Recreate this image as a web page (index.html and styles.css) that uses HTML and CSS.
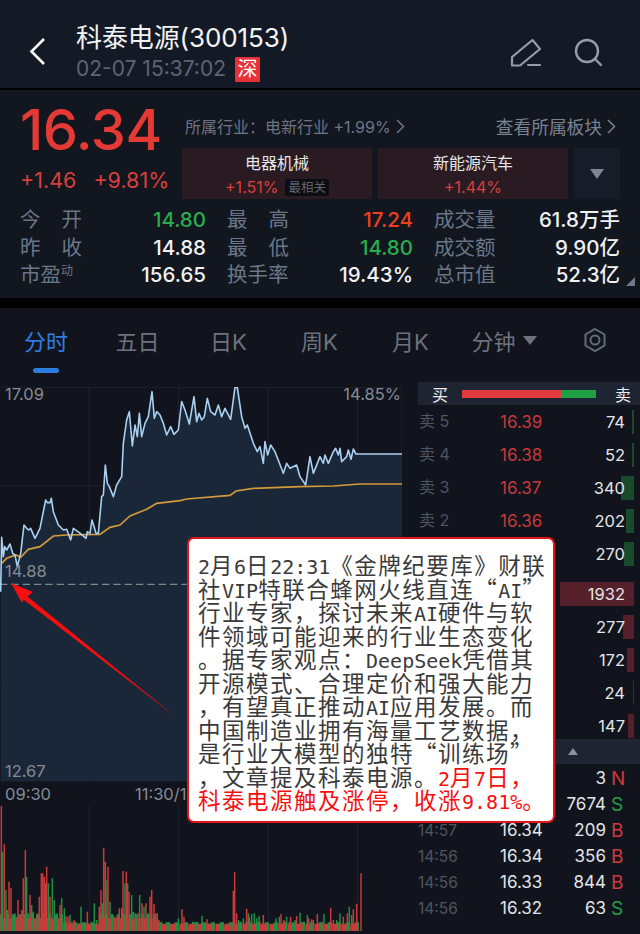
FILE: index.html
```html
<!DOCTYPE html>
<html lang="zh">
<head>
<meta charset="utf-8">
<title>科泰电源(300153)</title>
<link rel="stylesheet" href="styles.css">
</head>
<body>
<div class="page">
  <header class="topbar">
    <svg class="back" width="20" height="32" viewBox="0 0 20 32"><path d="M16 3 3.5 15.5 16 28"/></svg>
    <div class="title-block">
      <div class="title">科泰电源(300153)</div>
      <div class="subtitle"><span>02-07 15:37:02</span><span class="badge">深</span></div>
    </div>
    <svg class="edit" width="32" height="30" viewBox="0 0 32 30"><path d="M2 27.500V19L22.500 2 30 11 10 27.500H2Z"/><path d="M18 27H30"/></svg>
    <svg class="search" width="32" height="32" viewBox="0 0 32 32"><circle cx="14" cy="14" r="11"/><path d="M22 22 28 28"/></svg>
  </header>

  <section class="quote">
    <div class="quote-top">
      <div class="price-block">
        <div class="price">16.34</div>
        <div class="change"><span>+1.46</span><span>+9.81%</span></div>
      </div>
      <div class="sector-block">
        <div class="sector-head">
          <span class="sector-name">所属行业：电新行业 +1.99%<svg class="caret" width="9" height="15" viewBox="0 0 9 15"><path d="M1 1 7.500 7.500 1 14"/></svg></span>
          <span class="sector-link">查看所属板块<svg class="caret" width="9" height="15" viewBox="0 0 9 15"><path d="M1 1 7.500 7.500 1 14"/></svg></span>
        </div>
        <div class="cards">
          <div class="card">
            <div class="card-name">电器机械</div>
            <div class="card-val"><span>+1.51%</span><span class="tag">最相关</span></div>
          </div>
          <div class="card">
            <div class="card-name">新能源汽车</div>
            <div class="card-val"><span>+1.44%</span></div>
          </div>
          <div class="card-more"><svg width="14" height="10" viewBox="0 0 14 10"><path d="M0 0H14L7 10Z"/></svg></div>
        </div>
      </div>
    </div>
    <div class="stats">
      <div class="stat"><span class="lab spread"><i>今</i><i>开</i></span><span class="green">14.80</span></div>
      <div class="stat"><span class="lab spread"><i>最</i><i>高</i></span><span class="orange">17.24</span></div>
      <div class="stat"><span class="lab">成交量</span><span>61.8万手</span></div>
      <div class="stat"><span class="lab spread"><i>昨</i><i>收</i></span><span>14.88</span></div>
      <div class="stat"><span class="lab spread"><i>最</i><i>低</i></span><span class="green">14.80</span></div>
      <div class="stat"><span class="lab">成交额</span><span>9.90亿</span></div>
      <div class="stat"><span class="lab">市盈<sup>动</sup></span><span>156.65</span></div>
      <div class="stat"><span class="lab">换手率</span><span>19.43%</span></div>
      <div class="stat"><span class="lab">总市值</span><span>52.3亿</span></div>
    </div>
    <svg class="corner" width="9" height="9" viewBox="0 0 9 9"><path d="M9 0V9H0Z"/></svg>
  </section>

  <nav class="tabs">
    <span class="tab active">分时</span>
    <span class="tab">五日</span>
    <span class="tab">日K</span>
    <span class="tab">周K</span>
    <span class="tab">月K</span>
    <span class="tab tab-min">分钟<svg width="14" height="9" viewBox="0 0 14 9"><path d="M0 0H14L7 9Z"/></svg></span>
    <span class="tab tab-icon"><svg width="24" height="26" viewBox="0 0 24 26"><path d="M12 2 21.500 7.500V18.500L12 24 2.500 18.500V7.500Z"/><circle cx="12" cy="13" r="4.500"/></svg></span>
  </nav>

  <main class="main">
    <div class="left">
      <div class="chart">
        <svg class="chart-svg" width="402" height="395" viewBox="0 261 1206 1185">
          <path class="area" d="M2 1443V875L5 712 10 770 14 740 20 750 30 732 38 760 45 765 52 800 62 760 72 675 80 685 86 690 92 685 105 715 120 685 137 600 142 608 150 608 154 595 160 635 175 675 190 690 200 688 212 720 220 685 238 698 258 715 262 695 270 700 276 660 288 700 295 700 305 590 310 585 316 495 322 550 328 560 340 590 350 555 365 530 370 430 380 360 388 335 397 438 405 375 412 410 418 340 425 410 435 370 445 350 456 275 463 355 470 335 480 345 490 370 500 405 512 380 522 403 535 390 545 305 555 330 568 372 582 290 590 365 597 340 605 360 613 350 622 295 632 335 645 345 655 315 665 350 675 325 692 358 705 262 712 262 725 350 735 385 742 375 760 430 772 455 780 440 790 490 795 425 803 465 812 435 825 455 850 520 860 490 870 505 890 495 900 530 917 555 930 470 940 520 960 470 970 490 975 465 985 490 1000 455 1007 445 1015 465 1020 445 1025 485 1040 470 1045 450 1053 478 1060 447 1068 462 1206 462V1443Z"/>
          <path class="grid" d="M0 262H1206M0 557H1206M0 1149H1206M0 1443H1206M268 262V1443M536 262V1443M805 262V1443M1073 262V1443M1206 262V1443"/>
          <path class="dash" d="M0 853H1206"/>
          <path class="avg" d="M5 790 20 775 48 765 62 772 85 748 120 740 160 708 200 705 300 703 330 682 360 675 390 648 440 628 470 610 540 602 560 597 690 586 708 573 760 565 900 560 1000 558 1080 552 1206 552"/>
          <path class="line" d="M2 875 5 712 10 770 14 740 20 750 30 732 38 760 45 765 52 800 62 760 72 675 80 685 86 690 92 685 105 715 120 685 137 600 142 608 150 608 154 595 160 635 175 675 190 690 200 688 212 720 220 685 238 698 258 715 262 695 270 700 276 660 288 700 295 700 305 590 310 585 316 495 322 550 328 560 340 590 350 555 365 530 370 430 380 360 388 335 397 438 405 375 412 410 418 340 425 410 435 370 445 350 456 275 463 355 470 335 480 345 490 370 500 405 512 380 522 403 535 390 545 305 555 330 568 372 582 290 590 365 597 340 605 360 613 350 622 295 632 335 645 345 655 315 665 350 675 325 692 358 705 262 712 262 725 350 735 385 742 375 760 430 772 455 780 440 790 490 795 425 803 465 812 435 825 455 850 520 860 490 870 505 890 495 900 530 917 555 930 470 940 520 960 470 970 490 975 465 985 490 1000 455 1007 445 1015 465 1020 445 1025 485 1040 470 1045 450 1053 478 1060 447 1068 462 1206 462"/>
        </svg>
        <span class="axis a-tl">17.09</span>
        <span class="axis a-tr">14.85%</span>
        <span class="axis a-ml">14.88</span>
        <span class="axis a-bl">12.67</span>
      </div>
      <div class="times"><span>09:30</span><span class="mid">11:30/13:00</span></div>
      <svg class="volume" width="402" height="126" viewBox="0 195 1206 378">
        <path class="grid" d="M268 195V573M536 195V573M805 195V573M1073 195V573"/>
        <path class="vg" d="M8 335V573M18 450V573M22 510V573M32 540V573M40 525V573M45 520V573M50 530V573M80 410V573M85 520V573M95 495V573M100 515V573M105 535V573M145 430V573M157 415V573M163 480V573M172 520V573M185 475V573M193 505V573M210 525V573M218 550V573M228 545V573M236 550V573M243 500V573M250 550V573M256 548V573M265 550V573M283 490V573M290 540V573M307 490V573M321 420V573M330 485V573M338 530V573M375 430V573M383 430V573M395 465V573M400 515V573M406 520V573M419 465V573M432 500V573M445 520V573M472 520V573M485 545V573M492 555V573M510 550V573M535 535V573M562 548V573M578 545V573M593 545V573M606 528V573M613 550V573M625 550V573M632 560V573M650 555V573M662 550V573M682 558V573M716 540V573M722 545V573M730 535V573M738 545V573M745 520V573M755 522V573M763 520V573M770 535V573M777 528V573M805 558V573M815 558V573M828 535V573M838 530V573M860 530V573M868 545V573M885 540V573M900 518V573M912 545V573M922 525V573M940 540V573M960 550V573M972 522V573M1010 540V573M1020 520V573M1048 500V573M1055 525V573"/>
        <path class="fill-g" d="M0 548H190M296 548H470"/>
        <path class="fill-g fill-low" d="M190 560H296M470 560H1078"/>
        <path class="fill-r" d="M0 554H190M296 554H470"/>
        <path class="fill-r fill-low" d="M190 562H296M470 562H1078"/>
        <path class="vr" d="M4 198V573M13 313V573M27 425V573M33 445V573M54 480V573M60 525V573M65 510V573M70 415V573M76 330V573M90 465V573M112 520V573M118 470V573M124 400V573M128 400V573M133 410V573M137 430V573M140 380V573M150 470V573M180 495V573M198 528V573M204 530V573M213 545V573M222 540V573M232 560V573M262 515V573M272 555V573M298 500V573M303 450V573M311 323V573M316 365V573M324 380V573M345 530V573M352 530V573M358 505V573M365 505V573M369 393V573M379 395V573M387 455V573M414 520V573M426 490V573M438 490V573M450 470V573M455 450V573M462 492V573M468 520V573M477 540V573M498 555V573M516 555V573M525 553V573M546 508V573M552 530V573M567 560V573M585 556V573M600 560V573M621 538V573M642 560V573M656 556V573M675 555V573M690 560V573M700 452V573M704 397V573M710 520V573M740 506V573M748 530V573M780 545V573M790 525V573M798 550V573M843 522V573M852 540V573M872 530V573M890 528V573M905 545V573M926 535V573M935 538V573M952 522V573M965 545V573M992 503V573M1000 540V573M1022 552V573M1030 530V573M1042 520V573M1060 508V573M1070 491V573M1083 400V573"/>
      </svg>
    </div>

    <aside class="right">
      <div class="ratio">
        <span>买</span>
        <div class="ratio-bar"><div class="ratio-red"></div></div>
        <span>卖</span>
      </div>
      <div class="book">
        <div class="row"><span class="r-lab">卖 5</span><span class="r-price">16.39</span><span class="r-qty">74</span><i class="vol sell" style="width:2px"></i></div>
        <div class="row"><span class="r-lab">卖 4</span><span class="r-price">16.38</span><span class="r-qty">52</span><i class="vol sell" style="width:2px"></i></div>
        <div class="row"><span class="r-lab">卖 3</span><span class="r-price">16.37</span><span class="r-qty">340</span><i class="vol sell" style="width:13px"></i></div>
        <div class="row"><span class="r-lab">卖 2</span><span class="r-price">16.36</span><span class="r-qty">202</span><i class="vol sell" style="width:8px"></i></div>
        <div class="row"><span class="r-lab"></span><span class="r-price"></span><span class="r-qty">270</span><i class="vol sell" style="width:10px"></i></div>
      </div>
      <div class="book book-buy">
        <div class="row"><span class="r-lab"></span><span class="r-price"></span><span class="r-qty">1932</span><i class="vol buy" style="width:74px"></i></div>
        <div class="row"><span class="r-lab"></span><span class="r-price"></span><span class="r-qty">277</span><i class="vol buy" style="width:11px"></i></div>
        <div class="row"><span class="r-lab"></span><span class="r-price"></span><span class="r-qty">172</span><i class="vol buy" style="width:7px"></i></div>
        <div class="row"><span class="r-lab"></span><span class="r-price"></span><span class="r-qty">24</span><i class="vol buy" style="width:1px"></i></div>
        <div class="row"><span class="r-lab"></span><span class="r-price"></span><span class="r-qty">147</span><i class="vol buy" style="width:6px"></i></div>
      </div>
      <div class="trade-head"><svg width="10" height="7" viewBox="0 0 10 7"><path d="M5 0 10 7H0Z"/></svg></div>
      <div class="trades">
        <div class="trade"><span class="t-time"></span><span class="t-price"></span><span class="t-qty">3</span><span class="t-flag red">N</span></div>
        <div class="trade"><span class="t-time"></span><span class="t-price"></span><span class="t-qty">7674</span><span class="t-flag grn">S</span></div>
        <div class="trade"><span class="t-time">14:57</span><span class="t-price">16.34</span><span class="t-qty">209</span><span class="t-flag red">B</span></div>
        <div class="trade"><span class="t-time">14:56</span><span class="t-price">16.34</span><span class="t-qty">356</span><span class="t-flag red">B</span></div>
        <div class="trade"><span class="t-time">14:56</span><span class="t-price">16.33</span><span class="t-qty">844</span><span class="t-flag red">B</span></div>
        <div class="trade"><span class="t-time">14:56</span><span class="t-price">16.32</span><span class="t-qty">63</span><span class="t-flag grn">S</span></div>
      </div>
    </aside>
  </main>

  <div class="callout"><b>2</b>月<b>6</b>日<b>22:31</b>《金牌纪要库》财联<br>社<b>VIP</b>特联合蜂网火线直连“<b>AI</b>”<br>行业专家，探讨未来<b>AI</b>硬件与软<br>件领域可能迎来的行业生态变化<br>。据专家观点：<b>DeepSeek</b>凭借其<br>开源模式、合理定价和强大能力<br>，有望真正推动<b>AI</b>应用发展。而<br>中国制造业拥有海量工艺数据，<br>是行业大模型的独特“训练场”<br>，文章提及科泰电源。<em><b>2</b>月<b>7</b>日，<br>科泰电源触及涨停，收涨<b>9.81%</b>。</em></div>

  <svg class="arrow" width="190" height="145" viewBox="0 575 190 145"><path d="M11 583 33 592 27.500 596.500 177 718 23.500 599.500 22 603Z"/></svg>
</div>
</body>
</html>
```

FILE: styles.css
```css
* { box-sizing: border-box; margin: 0; padding: 0; }
html, body { background: #000; }
body { font-family: Inter, "Noto Sans CJK SC", sans-serif; }
i, em { font-style: normal; }

.page { position: relative; width: 640px; height: 934px; overflow: hidden; background: #000; color: #eceef0; }

/* top bar */
.topbar { display: flex; align-items: center; height: 88px; background: #141a25; padding-left: 28px; }
.back { fill: none; stroke: #fff; stroke-width: 2.6; margin-top: 16px; }
.title-block { margin-left: 28px; padding-top: 15px; flex: 1; }
.title { font-size: 26px; line-height: 34px; color: #f2f3f5; font-weight: 400; letter-spacing: -0.1px; }
.subtitle { display: flex; align-items: center; gap: 9px; color: #5c6577; font-size: 21px; line-height: 26px; margin-top: 1px; }
.badge { width: 25px; height: 25px; background: #e8303a; color: #fff; font-size: 20px; line-height: 25px; text-align: center; border-radius: 1px; }
.edit { fill: none; stroke: #969daa; stroke-width: 2.2; stroke-linejoin: round; stroke-linecap: round; margin-top: 17px; }
.search { fill: none; stroke: #969daa; stroke-width: 2.4; stroke-linecap: round; margin: 17px 35px 0 31px; }

/* quote */
.quote { position: relative; margin-top: 2px; height: 208px; background: #12161f; padding: 0 20px; }
.quote-top { display: flex; height: 110px; }
.price-block { width: 162px; flex: none; }
.price { font-size: 56px; line-height: 58px; margin-top: 11px; color: #e53935; font-weight: 500; letter-spacing: -0.5px; }
.change { display: flex; gap: 17px; font-size: 21.500px; line-height: 28px; margin-top: 7px; color: #d8403c; white-space: nowrap; }
.sector-block { margin-left: 0; flex: 1; min-width: 0; }
.sector-head { display: flex; justify-content: space-between; align-items: center; height: 58px; padding: 14px 4px 0 3px; color: #6d7585; font-size: 16px; white-space: nowrap; }
.sector-name, .sector-link { display: inline-flex; align-items: center; gap: 3px; }
.sector-link { font-size: 17.700px; color: #7a8292; }
.caret { fill: none; stroke: currentColor; stroke-width: 1.5; margin-left: 2px; }
.cards { display: flex; gap: 6px; }
.card { width: 190px; height: 51px; background: #2a1a22; text-align: center; }
.card-name { font-size: 16px; line-height: 22px; margin-top: 4px; color: #e6e6e8; }
.card-val { display: flex; justify-content: center; align-items: center; gap: 7px; font-size: 16px; line-height: 22px; margin-top: 2px; color: #d8403c; }
.tag { background: #0c0e13; color: #60646e; font-size: 12.500px; line-height: 17px; padding: 0 3px; border-radius: 3px; }
.card-more { width: 46px; height: 51px; background: #171d28; display: flex; align-items: center; justify-content: center; }
.card-more path { fill: #7d8594; }
.stats { display: grid; grid-template-columns: repeat(3, 186px); column-gap: 21px; grid-auto-rows: 27.500px; font-size: 20.500px; line-height: 27.500px; margin-top: 6px; }
.stat { display: flex; justify-content: space-between; white-space: nowrap; color: #f0f1f3; font-weight: 500; }
.lab { color: #6a7688; width: 62px; font-weight: 400; }
.spread { display: flex; justify-content: space-between; }
.lab sup { font-size: 12px; line-height: 0; vertical-align: 7px; }
.green { color: #27ae4e; }
.orange { color: #f0401f; }
.corner { position: absolute; right: 5px; top: 187px; fill: #707a8c; }

/* tabs */
.tabs { position: relative; display: flex; height: 74px; margin-top: 10px; background: #11141d; color: #6d727d; font-size: 22px; }
.tab { position: relative; display: flex; align-items: center; justify-content: center; height: 64px; gap: 7px; white-space: nowrap; width: 91px; }
.tab:first-child { width: 92px; }
.tab svg path { fill: #6d727d; }
.active { color: #2f7de1; }
.active::after { content: ""; position: absolute; left: 33px; bottom: -1px; width: 26px; height: 5px; border-radius: 3px; background: #2f7de1; }
.tab-min { padding-left: 5px; }
.tab-icon { width: 90px; padding-left: 6px; }
.tab-icon svg path, .tab-icon svg circle { fill: none; stroke: #646b78; stroke-width: 2; }

/* main */
.main { display: flex; height: 552px; background: #11141d; }
.left { width: 402px; flex: none; }
.right { width: 222px; margin-left: 16px; flex: none; }

.chart { position: relative; margin-top: 5px; height: 395px; }
.chart-svg { display: block; }
.area { stroke: none; fill: #192739; }
.grid { fill: none; stroke: #1f2632; stroke-width: 2.500; }
.dash { fill: none; stroke: #7a8a88; stroke-width: 3.500; stroke-dasharray: 22 12; }
.avg { fill: none; stroke: #d49a3a; stroke-width: 5; }
.line { fill: none; stroke: #a9d0f0; stroke-width: 4.800; stroke-linejoin: round; }
.axis { position: absolute; font-size: 16.500px; line-height: 20px; color: #868b95; }
.a-tl { left: 5px; top: -3px; }
.a-tr { right: 1px; top: -3px; }
.a-ml { left: 5px; top: 174px; }
.a-bl { left: 5px; top: 374px; }

.times { display: flex; height: 23px; padding-left: 5px; font-size: 16.500px; line-height: 25px; color: #868b95; white-space: nowrap; }
.mid { margin-left: 84px; }
.volume { display: block; }
.vg { fill: none; stroke: #1f8f44; stroke-width: 4.500; }
.vr { fill: none; stroke: #c93a3a; stroke-width: 4.500; }
.fill-g { fill: none; stroke: #1f8f44; stroke-width: 50; stroke-dasharray: 9 9; }
.fill-r { fill: none; stroke: #c93a3a; stroke-width: 38; stroke-dasharray: 9 9; stroke-dashoffset: 9; }
.fill-g.fill-low { stroke-width: 26; stroke-dasharray: 13 14; }
.fill-r.fill-low { stroke-width: 22; stroke-dasharray: 14 13; stroke-dashoffset: 13; }

/* order book */
.ratio { display: flex; align-items: center; height: 23px; background: #1f2433; font-size: 16px; color: #eceef0; padding: 0 9px 0 14px; }
.ratio-bar { width: 136px; height: 8px; margin: 0 19px 0 14px; background: #1fa045; }
.ratio-red { width: 100px; height: 8px; background: #e33b3b; }
.row { position: relative; display: flex; align-items: center; height: 33px; font-size: 17px; }
.r-lab { width: 82px; padding: 0 0 3px 1px; color: #4f5564; font-size: 16px; white-space: nowrap; }
.r-price { width: 47px; color: #c8383a; }
.r-qty { position: relative; z-index: 1; width: 78px; text-align: right; color: #e4e5e8; font-size: 16.500px; }
.vol { position: absolute; right: 6px; top: 4.500px; height: 24px; }
.sell { background: #1a4a2c; }
.buy { background: #552029; }
.book-buy { height: 162px; margin-top: 7px; }
.trade-head { position: relative; display: flex; align-items: center; height: 25px; background: #1f2433; padding-left: 150px; }
.trade-head path { fill: #8a90a0; }
.trades { padding-top: 1px; }
.trade { display: flex; align-items: center; height: 26px; font-size: 17px; white-space: nowrap; }
.t-time { width: 82px; color: #4f5461; font-size: 15.500px; }
.t-price { width: 47px; color: #e4e5e8; }
.t-qty { width: 59px; text-align: right; color: #e4e5e8; }
.t-flag { margin-left: 5px; font-size: 19px; }
.red { color: #d0393a; }
.grn { color: #20a14a; }

/* overlays */
.callout { position: absolute; left: 187px; top: 537px; width: 368px; height: 286px; padding: 14px 0 0 9px; background: #fff; border: 2px solid #e5141a; border-radius: 7px; color: #3a3a3a; font-family: "Noto Sans CJK SC", sans-serif; font-size: 22.500px; letter-spacing: 1.500px; line-height: 23.500px; white-space: nowrap; text-spacing-trim: space-all; font-kerning: none; }
.callout b { font-family: "DejaVu Sans Mono", monospace; font-size: 20px; font-weight: 400; line-height: 0; letter-spacing: 0; }
.callout em { color: #f50f0f; }
.arrow { position: absolute; left: 0; top: 575px; fill: #f50f0f; }
```
